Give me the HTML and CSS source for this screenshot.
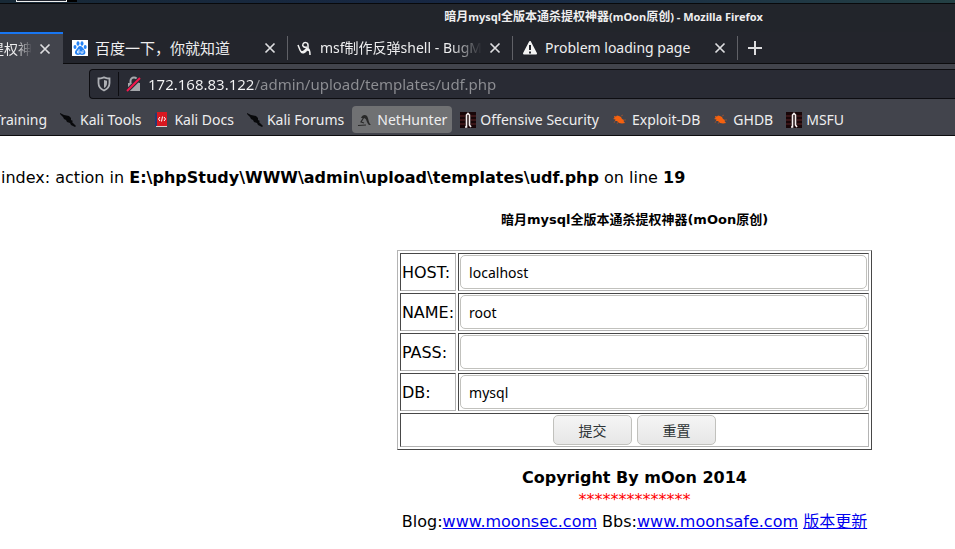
FILE: index.html
```html
<!DOCTYPE html>
<html lang="zh-CN">
<head>
<meta charset="utf-8">
<title>暗月mysql全版本通杀提权神器(mOon原创)</title>
<link rel="stylesheet" href="styles.css">
</head>
<body>
<svg class="defs" width="0" height="0" aria-hidden="true">
  <symbol id="close" viewBox="0 0 12 12"><path d="M1.500 1.500l9 9m0-9l-9 9" stroke="currentColor" stroke-width="1.700"/></symbol>
  <symbol id="dragon" viewBox="0 0 16 16"><path d="M0 1l4 2 5 1 2 2 0 2 2 1-1 1 4 4-1 1-4-2-1-2-3-1-1-2-2-1-1-2-3-3z" fill="#08090b"/></symbol>
  <symbol id="offsec" viewBox="0 0 16 16"><path fill="#180608" d="M0 0h16v16H0z"/><path d="M0 4h5m6 0h5M0 8h5m6 0h5M0 12h5m6 0h5" stroke="#5c2426"/><path d="M5 15h1.500V3L8 1.500 9.500 3v10l1.500 2" fill="none" stroke="#f4eded" stroke-width="1.600"/></symbol>
  <symbol id="exploit" viewBox="0 0 16 16"><path d="M2 4l2 .5 1-1 2 .5 2 1 1 2 2 1-.5 1 1.500 2-3 .5-3-.5-2-2H3l.500-1.500L1 7l1.500-1z" fill="#f4610f"/><path d="M9 4l2-1m-8 6l-1 2m4-1l-1 2m7-4l2 0" stroke="#9b5230" stroke-width=".8"/></symbol>
</svg>
<header class="browser">
  <div class="desktop"><span class="panel-item"></span><span class="panel-mark"></span></div>
  <div class="titlebar">暗月<span class="latin">mysql</span>全版本通杀提权神器<span class="latin">(mOon</span>原创<span class="latin">) - Mozilla Firefox</span></div>
  <nav class="tabs" aria-label="Tabs">
    <div class="tab current"><a class="tab-label cut" href="#">提权神</a><button class="close" aria-label="Close tab"><svg><use href="#close"/></svg></button></div>
    <div class="tab">
      <svg class="icon" viewBox="0 0 16 16"><path fill="#fff" d="M0 0h16v16H0z"/><g fill="#2583f5"><ellipse cx="3" cy="7" rx="1.500" ry="2.100"/><ellipse cx="6" cy="3.500" rx="1.500" ry="2.200"/><ellipse cx="10" cy="3.500" rx="1.500" ry="2.200"/><ellipse cx="13.200" cy="7" rx="1.500" ry="2.100"/><path d="M8 6c-2 0-2 2-4 4-2 2-1 5 2 5l2-.4 2 .4c4 0 4-3 2.500-5C11 8 10 6 8 6z"/></g><path d="M7 9v4H5.500v-2H7m2 0v2h2v-3" fill="none" stroke="#fff" stroke-width=".8"/></svg>
      <a class="tab-label cjk" href="#">百度一下，你就知道</a><button class="close" aria-label="Close tab"><svg><use href="#close"/></svg></button></div>
    <div class="tab">
      <svg class="icon" viewBox="0 0 16 16" fill="none" stroke="#f1f1f1" stroke-width="1.500"><path d="M1 5l2 5c1 3 4 2 7-2M10 7c-3 1-5-1-4-3s5-2 5 1v6M4 12c2 2 5 0 6-3 2-1 3 2 3 6"/></svg>
      <a class="tab-label fade" href="#">msf制作反弹shell - BugM</a><button class="close" aria-label="Close tab"><svg><use href="#close"/></svg></button></div>
    <div class="tab">
      <svg class="icon" viewBox="0 0 16 16"><path d="M8 2l6 11.500H2z" fill="#f4f4f4" stroke="#f4f4f4" stroke-width="2" stroke-linejoin="round"/><path d="M8 5v5m0 1.500v2" stroke="#24262d" stroke-width="2"/></svg>
      <a class="tab-label" href="#">Problem loading page</a><button class="close" aria-label="Close tab"><svg><use href="#close"/></svg></button></div>
    <button class="new-tab" aria-label="New tab"><svg viewBox="0 0 14 14"><path d="M7 0v14M0 7h14" stroke="currentColor" stroke-width="2"/></svg></button>
  </nav>
  <div class="navbar">
    <div class="urlbar">
      <svg class="shield" viewBox="0 0 14 16" fill="none" stroke="#adafb4"><path d="M1.500 2.500C4 2.500 5 2 7 1.300c2 .7 3 1.200 5.500 1.200V7c0 4-2 6-5.500 7.500C3.500 13 1.500 11 1.500 7z" stroke-width="1.800"/><path d="M7 4v8c2-1 3-2.500 3-5V4.800z" fill="#adafb4" stroke="none"/></svg>
      <span class="rule"></span>
      <svg class="lock" viewBox="0 0 16 16"><path d="M4.500 8V5a3.500 3.500 0 0 1 7 0v3" fill="none" stroke="#a5a7ab" stroke-width="2"/><path fill="#a5a7ab" d="M2 7h12v8H2z"/><path d="M1 15L14 2" stroke="#292b34" stroke-width="4"/><path d="M1 15L14 2" stroke="#f5164b" stroke-width="2"/></svg>
      <input class="url" type="text" aria-label="Address" value="172.168.83.122/admin/upload/templates/udf.php">
    </div>
  </div>
  <nav class="bookmarks" aria-label="Bookmarks">
    <a class="bookmark first" href="#">Training</a>
    <a class="bookmark" href="#"><svg class="icon"><use href="#dragon"/></svg>Kali Tools</a>
    <a class="bookmark" href="#"><svg class="icon" viewBox="0 0 16 16"><path fill="#253b72" d="M1 1h3v13H1z"/><path fill="#d91820" d="M3 0h10v14H3z"/><path fill="#d5d0d0" d="M2 14h11v1H2z"/><path d="M6 5L4.500 7 6 9m4-4l1.500 2L10 9M8.500 4.500l-1 5" fill="none" stroke="#fff"/></svg>Kali Docs</a>
    <a class="bookmark" href="#"><svg class="icon"><use href="#dragon"/></svg>Kali Forums</a>
    <a class="bookmark hover" href="#"><svg class="icon" viewBox="0 0 16 16"><path d="M4 6c1-3 4-4 6-2 2 3 1 6 4 9h-2C9 10 10 7 7 6z" fill="#292929"/><path d="M7 5l-3 5 3 1M1 13.500l8-.5" fill="none" stroke="#292929" stroke-width="1.200"/></svg>NetHunter</a>
    <a class="bookmark" href="#"><svg class="icon"><use href="#offsec"/></svg>Offensive Security</a>
    <a class="bookmark" href="#"><svg class="icon"><use href="#exploit"/></svg>Exploit-DB</a>
    <a class="bookmark" href="#"><svg class="icon"><use href="#exploit"/></svg>GHDB</a>
    <a class="bookmark" href="#"><svg class="icon"><use href="#offsec"/></svg>MSFU</a>
  </nav>
</header>
<main>
  <p class="notice">index: action in <b>E:\phpStudy\WWW\admin\upload\templates\udf.php</b> on line <b>19</b></p>
  <div class="content">
    <h1>暗月mysql全版本通杀提权神器(mOon原创)</h1>
    <form>
      <table>
        <tr><td><label for="host">HOST:</label></td><td><input id="host" type="text" size="40" value="localhost"></td></tr>
        <tr><td><label for="name">NAME:</label></td><td><input id="name" type="text" size="40" value="root"></td></tr>
        <tr><td><label for="pass">PASS:</label></td><td><input id="pass" type="text" size="40"></td></tr>
        <tr><td><label for="db">DB:</label></td><td><input id="db" type="text" size="40" value="mysql"></td></tr>
        <tr><td colspan="2"><div class="actions"><button type="submit">提交</button><button type="reset">重置</button></div></td></tr>
      </table>
    </form>
    <footer>
      <div><b>Copyright By mOon 2014</b></div>
      <div class="stars">**************</div>
      <div>Blog:<a href="#">www.moonsec.com</a> Bbs:<a href="#">www.moonsafe.com</a> <a href="#">版本更新</a></div>
    </footer>
  </div>
</main>
</body>
</html>
```
FILE: styles.css
```css
* { box-sizing: border-box; }
body {
  margin: 0;
  background: #fff;
  color: #000;
  font: 16px/22px "DejaVu Sans", "Noto Sans CJK SC", sans-serif;
  overflow-x: hidden;
}
.defs { display: block; height: 0; }
.browser {
  background: #42444c;
  color: #eeeeef;
  font: 14px/20px "Noto Sans", "Noto Sans CJK SC", sans-serif;
  border-bottom: 1px solid #0c0c0e;
}
.browser a { color: inherit; text-decoration: none; }
.browser button { border: 0; background: none; padding: 0; color: #dddddf; }
.desktop {
  display: flex;
  height: 4px;
  padding-left: 16px;
  background: linear-gradient(90deg, #182936, #172744 50%, #244044);
  border-bottom: 1px solid #08090b;
}
.panel-item { width: 51px; height: 2px; background: #222630; border: solid #eee; border-width: 0 1px 1px; }
.panel-mark { width: 10px; height: 2px; background: #000; }
.titlebar {
  height: 28px;
  background: #22252b;
  padding: 3px 0 0 252px;
  text-align: center;
  font-size: 12px;
  font-weight: 700;
}
.latin { font-size: 11px; }
.tabs { display: flex; height: 32px; background: #23252c; border-bottom: 1px solid #0c0c0e; }
.tab {
  position: relative;
  display: flex;
  align-items: center;
  flex: 0 0 225px;
  min-width: 0;
  padding: 0 12px 0 9px;
}
.tab + .tab::after {
  content: "";
  position: absolute;
  right: 0;
  top: 4px;
  height: 24px;
  border-right: 1px solid #606167;
}
.tab.current { flex-basis: 63px; padding: 0 12px 0 0; background: #42444c; border-top: 2px solid #1876f2; height: 32px; }
.tab-label { flex: 1; min-width: 0; overflow: hidden; white-space: nowrap; margin-right: 7px; }
.tab .icon { margin-right: 7px; }
.cjk { font-family: "Noto Sans", "Noto Sans CJK TC", sans-serif; font-size: 15px; }
.fade { mask-image: linear-gradient(90deg, #000 80%, transparent); }
.cut { display: flex; justify-content: flex-end; mask-image: linear-gradient(90deg, #000 50%, transparent); }
.close { display: flex; }
.close svg { width: 12px; height: 12px; }
.new-tab { display: flex; align-items: center; margin-left: 10px; }
.new-tab svg { width: 14px; height: 14px; }
.icon { width: 16px; height: 16px; flex: none; }
.navbar { padding: 5px 0 4px 89px; overflow: hidden; }
.urlbar {
  display: flex;
  align-items: center;
  height: 30px;
  background: #292b34;
  border: 1px solid #0d0d11;
  border-right: 0;
  border-radius: 4px 0 0 4px;
}
.shield { width: 14px; height: 16px; margin-left: 7px; }
.rule { width: 1px; height: 24px; background: #0d0d11; margin: 0 7px; }
.lock { width: 16px; height: 16px; margin-right: 6px; }
.url {
  flex: 1;
  min-width: 0;
  border: 0;
  padding: 0;
  outline: 0;
  font: inherit;
  font-size: 15px;
  color: transparent;
  background: linear-gradient(90deg, #f5f5f6 106px, #8e8f94 106px);
  background-clip: text;
}
.bookmarks { display: flex; gap: 3px; padding: 3px 0 2px; white-space: nowrap; }
.bookmark { display: flex; align-items: center; gap: 4px; padding: 4px 5px 3px; border-radius: 4px; }
.bookmark.first { width: 52px; padding-left: 0; justify-content: flex-end; }
.hover { background: #707173; }
.notice { margin: 30px 0 18px 1px; line-height: 24px; white-space: nowrap; }
.content { padding-left: 314px; text-align: center; }
h1 { margin: 0 0 18px; font-size: 13px; line-height: 24px; }
table {
  margin: 0 auto;
  border: 1px solid;
  border-color: #b4b4b4 #484848 #484848 #b4b4b4;
  border-spacing: 2px;
  text-align: left;
}
td { padding: 1px; border: 1px solid; border-color: #484848 #b4b4b4 #b4b4b4 #484848; }
label { display: block; padding-top: 2px; }
td input {
  display: block;
  width: 407px;
  height: 34px;
  padding: 0 8px;
  border: 1px solid #c1c1bd;
  border-radius: 5px;
  font: 14px/20px "Noto Sans", sans-serif;
}
.actions { display: flex; justify-content: center; gap: 5px; }
.actions button {
  width: 79px;
  height: 30px;
  padding: 0;
  border: 1px solid #c1c1bd;
  border-radius: 5px;
  background: linear-gradient(#f5f5f5, #e7e7e7);
  color: #2e3436;
  font: 14px/20px "Noto Sans CJK SC", sans-serif;
}
footer { margin-top: 17px; }
footer a { color: #00e; }
.stars { color: #f00; }
```
